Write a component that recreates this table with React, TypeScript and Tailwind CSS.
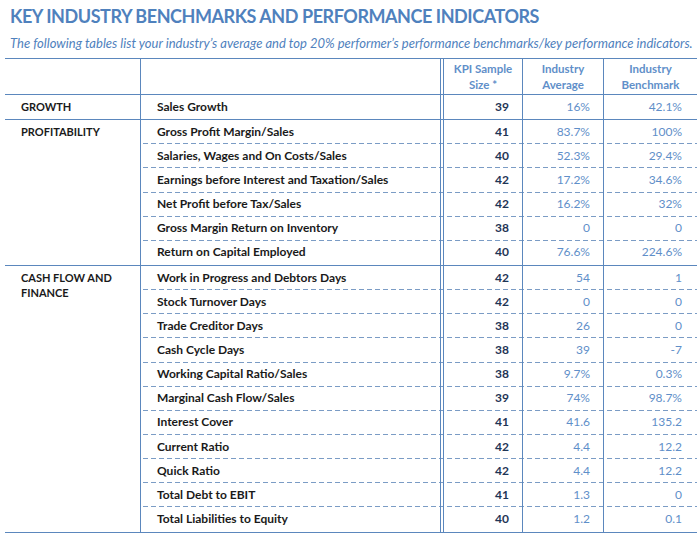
import React from "react";

type Row = { name: string; n: string; avg: string; bench: string };
type Group = { cat: string[]; rows: Row[] };

const groups: Group[] = [
  { cat: ["GROWTH"], rows: [{ name: "Sales Growth", n: "39", avg: "16%", bench: "42.1%" }] },
  {
    cat: ["PROFITABILITY"],
    rows: [
      { name: "Gross Profit Margin/Sales", n: "41", avg: "83.7%", bench: "100%" },
      { name: "Salaries, Wages and On Costs/Sales", n: "40", avg: "52.3%", bench: "29.4%" },
      { name: "Earnings before Interest and Taxation/Sales", n: "42", avg: "17.2%", bench: "34.6%" },
      { name: "Net Profit before Tax/Sales", n: "42", avg: "16.2%", bench: "32%" },
      { name: "Gross Margin Return on Inventory", n: "38", avg: "0", bench: "0" },
      { name: "Return on Capital Employed", n: "40", avg: "76.6%", bench: "224.6%" },
    ],
  },
  {
    cat: ["CASH FLOW AND", "FINANCE"],
    rows: [
      { name: "Work in Progress and Debtors Days", n: "42", avg: "54", bench: "1" },
      { name: "Stock Turnover Days", n: "42", avg: "0", bench: "0" },
      { name: "Trade Creditor Days", n: "38", avg: "26", bench: "0" },
      { name: "Cash Cycle Days", n: "38", avg: "39", bench: "-7" },
      { name: "Working Capital Ratio/Sales", n: "38", avg: "9.7%", bench: "0.3%" },
      { name: "Marginal Cash Flow/Sales", n: "39", avg: "74%", bench: "98.7%" },
      { name: "Interest Cover", n: "41", avg: "41.6", bench: "135.2" },
      { name: "Current Ratio", n: "42", avg: "4.4", bench: "12.2" },
      { name: "Quick Ratio", n: "42", avg: "4.4", bench: "12.2" },
      { name: "Total Debt to EBIT", n: "41", avg: "1.3", bench: "0" },
      { name: "Total Liabilities to Equity", n: "40", avg: "1.2", bench: "0.1" },
    ],
  },
];

export default function App() {
  return (
    <div className="w-[700px] h-[537px] bg-white overflow-hidden font-['Lato',sans-serif]">
      <div className="pl-[10px] pt-[4px] h-[28px] text-[18px] leading-[24px] font-bold text-[#4f81bd] tracking-[-0.45px] whitespace-nowrap">
        KEY INDUSTRY BENCHMARKS AND PERFORMANCE INDICATORS
      </div>
      <div className="mt-[7px] pl-[10px] h-[16px] text-[13px] leading-[16px] italic text-[#4f81bd] whitespace-nowrap">
        The following tables list your industry’s average and top 20% performer’s performance benchmarks/key performance indicators.
      </div>
      <div className="mt-[7px] ml-[5px] w-[692px] border-t border-[#5b87bd]">
        <div className="flex h-[36px] border-b border-[#5b87bd]">
          <div className="w-[136px] border-r border-[#5b87bd]" />
          <div className="w-[303px] border-r-[4px] border-double border-[#5b87bd]" />
          <div className="w-[79px] border-r border-[#5b87bd] flex items-center justify-center text-center text-[11.5px] leading-[16px] font-bold text-[#5f8fc9]">
            KPI Sample
            <br />
            Size *
          </div>
          <div className="w-[81px] border-r border-[#5b87bd] flex items-center justify-center text-center text-[11.5px] leading-[16px] font-bold text-[#5f8fc9]">
            Industry
            <br />
            Average
          </div>
          <div className="flex-1 flex items-center justify-center text-center text-[11.5px] leading-[16px] font-bold text-[#5f8fc9]">
            Industry
            <br />
            Benchmark
          </div>
        </div>
        {groups.map((g, gi) => (
          <div key={gi} className="flex border-b border-[#5b87bd]">
            <div className="w-[136px] border-r border-[#5b87bd] pl-[16px] pt-[4px] text-[11px] leading-[15px] font-bold text-[#1a1a1a]">
              {g.cat.map((c, i) => (
                <div key={i}>{c}</div>
              ))}
            </div>
            <div className="flex-1 flex flex-col">
              {g.rows.map((r, ri) => (
                <div
                  key={ri}
                  className={
                    "flex h-[24.15px] items-stretch " +
                    (ri < g.rows.length - 1
                      ? "bg-[linear-gradient(to_right,#7b9cc5_5px,transparent_5px)] bg-[length:8px_1px] bg-repeat-x bg-bottom"
                      : "")
                  }
                >
                  <div className="w-[303px] border-r-[4px] border-double border-[#5b87bd] pl-[16px] pb-[1px] flex items-center text-[12px] font-bold text-[#1a1a1a] whitespace-nowrap">
                    {r.name}
                  </div>
                  <div className="w-[79px] border-r border-[#5b87bd] pr-[13px] pb-[1px] flex items-center justify-end text-[12px] font-bold text-[#1f3556]">
                    {r.n}
                  </div>
                  <div className="w-[81px] border-r border-[#5b87bd] pr-[13px] pb-[1px] flex items-center justify-end text-[12px] text-[#5f8fc9]">
                    {r.avg}
                  </div>
                  <div className="flex-1 pr-[15px] pb-[1px] flex items-center justify-end text-[12px] text-[#5f8fc9]">
                    {r.bench}
                  </div>
                </div>
              ))}
            </div>
          </div>
        ))}
      </div>
    </div>
  );
}
